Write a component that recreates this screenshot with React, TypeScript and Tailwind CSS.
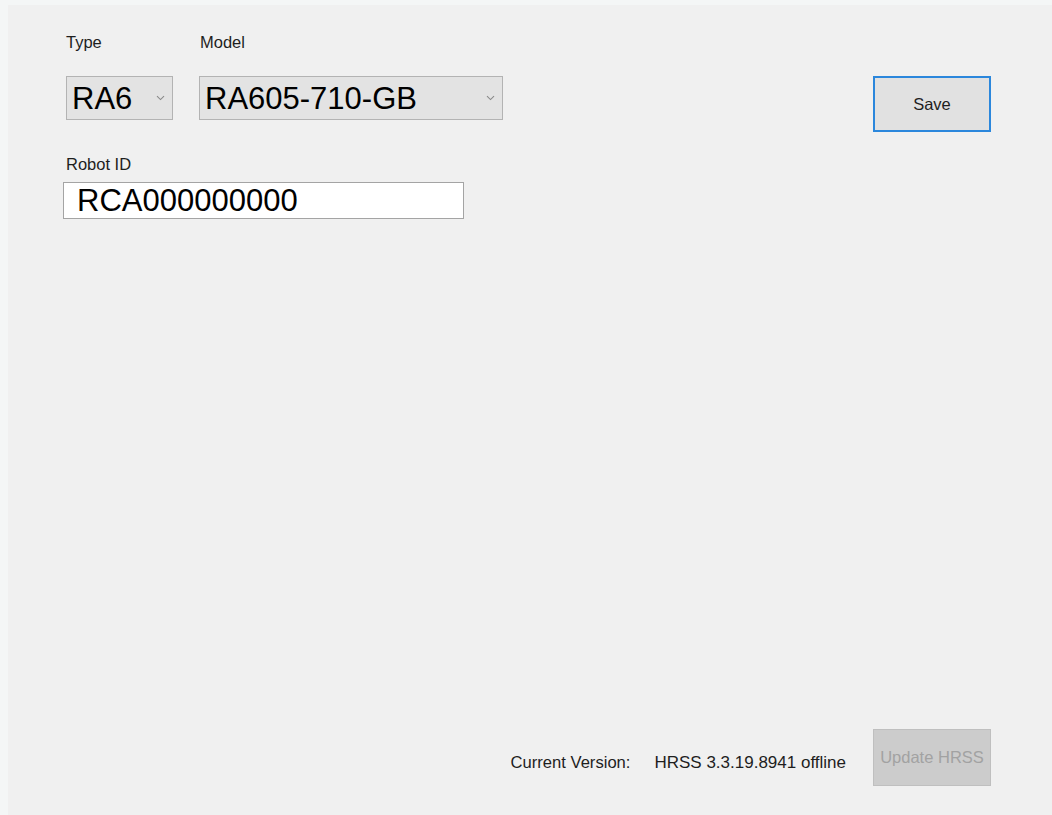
import React from "react";

const font = { fontFamily: '"Liberation Sans", Arial, sans-serif' };

function Chevron() {
  return (
    <svg width="9" height="6" viewBox="0 0 9 6" className="shrink-0">
      <path d="M1 1.2 L4.5 4.6 L8 1.2" fill="none" stroke="#8a8a8a" strokeWidth="1.1" />
    </svg>
  );
}

function Combo({ value, width }: { value: string; width: string }) {
  return (
    <div
      className={`${width} h-[44px] flex items-center justify-between pl-[5px] pr-[7px] bg-[#e3e3e3] border border-[#b3b3b3]`}
    >
      <span className="text-[31px] leading-none text-black">{value}</span>
      <Chevron />
    </div>
  );
}

export default function App() {
  return (
    <div className="w-[1052px] h-[815px] flex bg-[#f4f6f6] overflow-hidden" style={font}>
      <div className="w-[8px] shrink-0" />
      <div className="flex-1 flex flex-col">
        <div className="h-[5px] shrink-0" />
        <div className="flex-1 flex flex-col bg-[#f0f0f0] pl-[58px] pr-[61px] pt-[28px] pb-[29px]">
          {/* Type / Model selectors and Save */}
          <div className="flex items-start">
            <div className="flex flex-col">
              <span className="text-[16.5px] leading-[19px] text-[#1e1e1e] mb-[24px]">Type</span>
              <Combo value="RA6" width="w-[107px]" />
            </div>
            <div className="flex flex-col ml-[26px]">
              <span className="text-[16.5px] leading-[19px] text-[#1e1e1e] mb-[24px] pl-[1px]">Model</span>
              <Combo value="RA605-710-GB" width="w-[304px]" />
            </div>
            <button className="ml-auto mt-[43px] w-[118px] h-[56px] bg-[#e1e1e1] border-2 border-[#2b87dc] text-[16.5px] text-[#1e1e1e] flex items-center justify-center">
              Save
            </button>
          </div>

          {/* Robot ID */}
          <div className="flex flex-col mt-[23px]">
            <span className="text-[16.5px] leading-[19px] text-[#1e1e1e] mb-[8px]">Robot ID</span>
            <div className="-ml-[3px] w-[401px] h-[37px] bg-white border border-[#a4a4a4] flex items-center pl-[13px]">
              <span className="text-[31px] leading-none text-black">RCA000000000</span>
            </div>
          </div>

          <div className="flex-1" />

          {/* Version footer */}
          <div className="flex items-start justify-end">
            <span className="mt-[24px] text-[16.6px] leading-[19px] text-[#1e1e1e]">Current Version:</span>
            <span className="mt-[24px] ml-[24px] text-[17px] leading-[19px] text-[#1e1e1e]">HRSS 3.3.19.8941 offline</span>
            <button className="ml-[27px] w-[118px] h-[57px] bg-[#cccccc] border border-[#bfbfbf] text-[16.5px] text-[#a2a2a2] flex items-center justify-center">
              Update HRSS
            </button>
          </div>
        </div>
      </div>
    </div>
  );
}
